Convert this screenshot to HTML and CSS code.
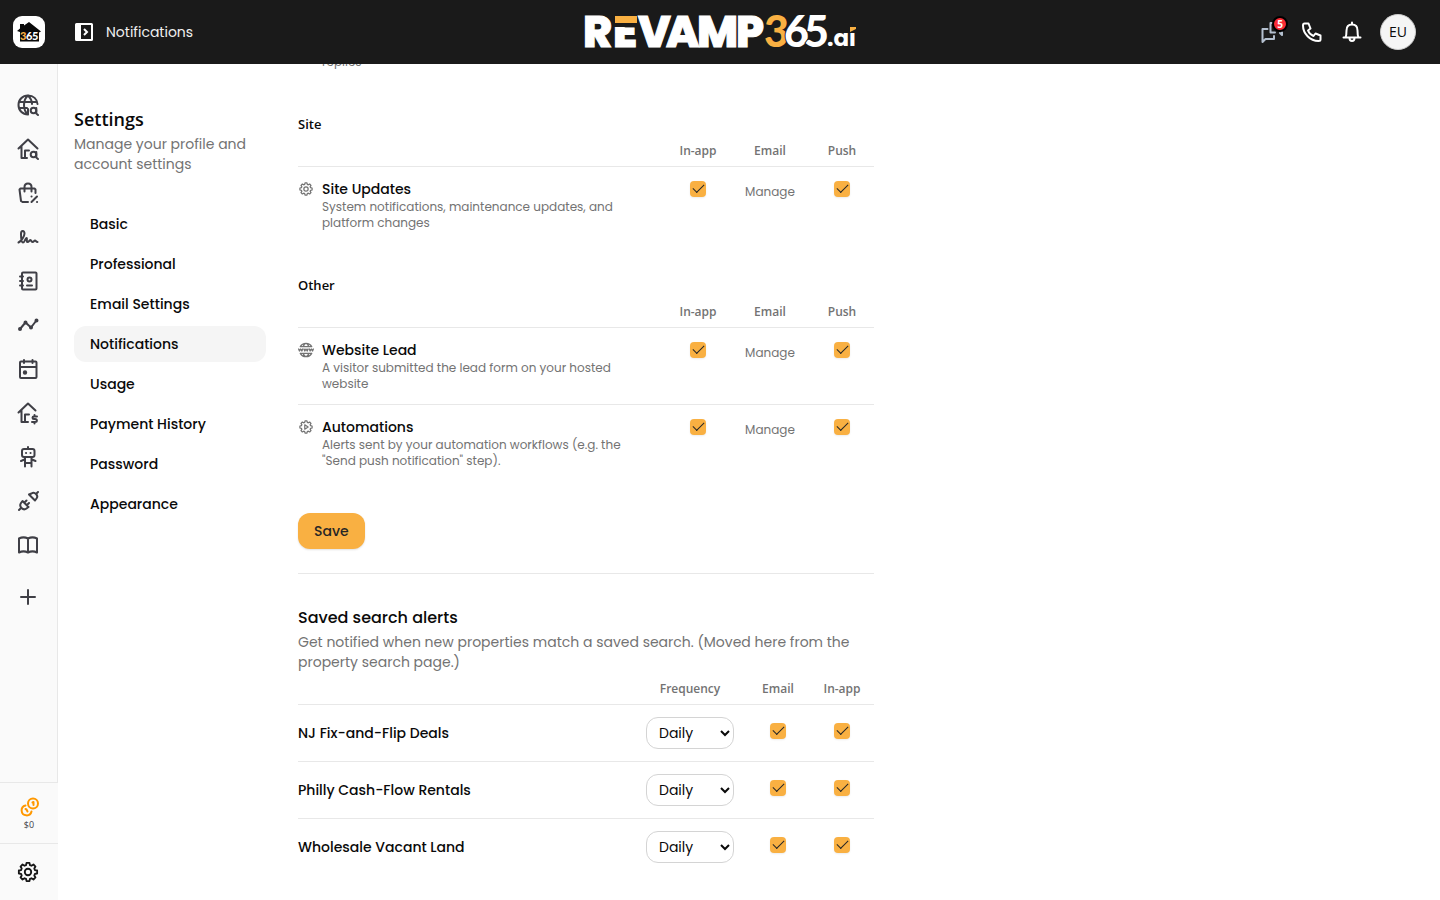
FILE: index.html
```html
<!DOCTYPE html>
<html lang="en">
<head>
<meta charset="utf-8">
<meta name="viewport" content="width=device-width, initial-scale=1">
<title>Notifications</title>
<link rel="stylesheet" href="styles.css">
</head>
<body>
<svg class="defs" aria-hidden="true">
  <defs>
    <symbol id="gear" viewBox="-1 -1 26 26"><path d="M10.400 2.100H13.600L14.100 4.500 15.800 5.200 17.900 3.900 20.100 6.100 18.800 8.200 19.500 9.900 21.900 10.400V13.600L19.500 14.100 18.800 15.800 20.100 17.900 17.900 20.100 15.800 18.800 14.100 19.500 13.600 21.900H10.400L9.900 19.500 8.200 18.800 6.100 20.100 3.900 17.900 5.200 15.800 4.500 14.100 2.100 13.600V10.400L4.500 9.900 5.200 8.200 3.900 6.100 6.100 3.900 8.200 5.200 9.900 4.500Z"/><circle cx="12" cy="12" r="3.500"/></symbol>
    <symbol id="auto" viewBox="-1 -1 26 26"><path d="M10.400 2.100H13.600L14.100 4.500 15.800 5.200 17.900 3.900 20.100 6.100 18.800 8.200 19.500 9.900 21.900 10.400V13.600L19.500 14.100 18.800 15.800 20.100 17.900 17.900 20.100 15.800 18.800 14.100 19.500 13.600 21.900H10.400L9.900 19.500 8.200 18.800 6.100 20.100 3.900 17.900 5.200 15.800 4.500 14.100 2.100 13.600V10.400L4.500 9.900 5.200 8.200 3.900 6.100 6.100 3.900 8.200 5.200 9.900 4.500Z"/><path d="M10 8.500v7l5.500-3.500z"/></symbol>
    <symbol id="www" viewBox="0 0 24 24"><path d="M3.500 7C5 4 8.300 2 12 2s7 2 8.500 5M3.500 17C5 20 8.300 22 12 22s7-2 8.500-5M8 7C8.700 4 10.200 2 12 2s3.300 2 4 5M8 17C8.700 20 10.200 22 12 22s3.300-2 4-5M4 7h16M4 17h16M1 10.500l1.200 3L4 10.500l1.800 3 1.200-3M9 10.500l1.200 3 1.800-3 1.800 3 1.200-3M17 10.500l1.200 3 1.800-3 1.800 3 1.200-3"/></symbol>
  </defs>
</svg>

<header class="topbar">
  <a class="brand" href="#" aria-label="Home">
    <svg viewBox="0 0 32 32" width="32" height="32"><rect width="32" height="32" rx="9" fill="#fff"/><path d="M4 15 7 12.500V8h4v1.500L16 6l12 9.500-2 1v9H7V16z" fill="#090909"/><text class="mark" x="7 13 19" y="24"><tspan class="gold">3</tspan><tspan>6</tspan><tspan>5</tspan></text></svg>
  </a>
  <button class="plain toggle" type="button" aria-label="Toggle sidebar">
    <svg viewBox="0 0 24 24" width="24" height="24"><path fill="#fff" fill-rule="evenodd" d="M4.500 3h15A1.500 1.500 0 0 1 21 4.500v15a1.500 1.500 0 0 1-1.500 1.500h-15A1.500 1.500 0 0 1 3 19.500v-15A1.500 1.500 0 0 1 4.500 3zM9 5v14h10V5z"/><path d="m12 9 3 3-3 3" fill="none" stroke="#fff" stroke-width="2"/></svg>
  </button>
  <h1 class="crumb">Notifications</h1>
  <svg class="logo" viewBox="0 0 272 40" width="272" height="40" role="img" aria-label="REVAMP365.ai">
    <text class="word" x="-1 29 54 82 113 152" y="35">REVAMP</text>
    <path d="M29 3h24v12H29z" fill="#1a1a1a"/><path d="M31 4h22v7H31z" fill="#f9b042"/>
    <text class="num" x="180 200 220" y="35"><tspan class="gold">3</tspan><tspan>6</tspan><tspan>5</tspan></text>
    <text class="ai" x="243" y="34">.ai</text>
    <path d="M265 13h8v7h-8z" fill="#1a1a1a"/><path d="M266 15h6v2l-6 3z" fill="#f9b042"/>
  </svg>
  <nav class="actions" aria-label="Account">
    <button class="plain" type="button" aria-label="Messages">
      <svg class="line muted" viewBox="0 0 24 24" width="24" height="24"><path d="M13 3h-2.500v9.500H15M20 13l2 2v-3M7.500 9H2.500v13l3-3H14v-3"/></svg>
      <span class="badge">5</span>
    </button>
    <button class="plain" type="button" aria-label="Calls">
      <svg class="line" viewBox="0 0 24 24" width="24" height="24"><path d="M4.500 3.500h4l2 5-2.500 2c1 2.500 3 4.500 5.500 5.500l2-2.500 5 2v4c0 1-1 1.500-2 1.500C10 21 3 13.500 3 5.500c0-1 .5-2 1.500-2z"/></svg>
    </button>
    <button class="plain" type="button" aria-label="Alerts">
      <svg class="line" viewBox="0 0 24 24" width="24" height="24"><path d="M3.500 17.500h17M5.500 17.500c1-2 1-3.500 1-7C6.500 7 8.500 4.500 12 4.500s5.500 2.500 5.500 6c0 3.500 0 5 1 7M12 4.500v-2M9.500 18c0 2 1 3 2.500 3s2.500-1 2.500-3"/></svg>
    </button>
    <button class="avatar" type="button">EU</button>
  </nav>
</header>

<div class="shell">
  <nav class="rail" aria-label="Main">
    <div class="rail-list">
      <a href="#" aria-label="Web search"><svg class="line" viewBox="0 0 24 24" width="24" height="24"><path d="M21.500 11C21 6 17.500 2.500 12 2.500S2.500 6.500 2.500 12s4 9.500 9.500 9.500M3 9h18M3 15h8M12 2.500C9 5 8 8 8 12s1 7 4 9.500V16M12 2.500C14.500 5 16 8 16 11"/><circle cx="17.500" cy="17.500" r="2.800"/><path d="M20.300 15v5.500L22 22"/></svg></a>
      <a href="#" aria-label="Property search"><svg class="line" viewBox="0 0 24 24" width="24" height="24"><path d="m2.500 11.500 9.500-9 9.500 9M5.500 9v12H9v-7.500h4M9 21h2"/><circle cx="17.500" cy="17.500" r="2.800"/><path d="M20.300 15v5.500L22 22"/></svg></a>
      <a href="#" aria-label="Deals"><svg class="line" viewBox="0 0 24 24" width="24" height="24"><path d="M19.500 12V8.500l-1-1H4.500l-1 1L5 20l1.500 1H12M8.500 10.500V6c0-2 1.500-3.500 3.500-3.500S15.500 4 15.500 6v4.500M21 15.500 15.500 21M15.500 15.500h.1M21 21h.1"/></svg></a>
      <a href="#" aria-label="Signatures"><svg class="line" viewBox="0 0 24 24" width="24" height="24"><path d="M2.500 17.500C5.500 16 8.500 11 8.500 8.500 8.500 5 5 5 5 9c0 4 .5 8.500 2 8.500 2 0 2-4.500 3.500-4.500 1 0-.5 4 1 4s2-2 3-2 .5 2 2 2 1.500-1.500 2.500-1.500 1 1.500 2.500 1.500"/></svg></a>
      <a href="#" aria-label="Contacts"><svg class="line" viewBox="0 0 24 24" width="24" height="24"><rect x="6" y="3.500" width="14.500" height="17" rx="1"/><path d="M4 7.500h3M4 12h3M4 16.500h3M11 16.500h5"/><circle cx="13.500" cy="10.500" r="2"/></svg></a>
      <a href="#" aria-label="Analytics"><svg class="line" viewBox="0 0 24 24" width="24" height="24"><path d="m4 16 5.500-6.500 5.500 5L20 8"/><g fill="currentColor"><circle cx="4" cy="16" r="1"/><circle cx="9.500" cy="9.500" r="1"/><circle cx="15" cy="14.500" r="1"/><circle cx="20.500" cy="7.500" r="1"/></g></svg></a>
      <a href="#" aria-label="Calendar"><svg class="line" viewBox="0 0 24 24" width="24" height="24"><rect x="4" y="4.500" width="16.500" height="16.500" rx="1"/><path d="M4 10h16M8 3v3M16.500 3v3"/><circle cx="9" cy="15.500" r="1.200" fill="currentColor"/></svg></a>
      <a href="#" aria-label="Property value"><svg class="line" viewBox="0 0 24 24" width="24" height="24"><path d="m2.500 11.500 9.500-9 7.500 7M5.500 9v12H9v-7.500h4M9 21h3M21 15.500h-3c-2 0-2 2.500 0 2.500h1c2.500 0 2.500 3 0 3h-3M18.500 14v1.500M18.500 21v1.500"/></svg></a>
      <a href="#" aria-label="Assistant"><svg class="line" viewBox="0 0 24 24" width="24" height="24"><rect x="6" y="4" width="12.500" height="8" rx="2"/><path d="M12 2v2M10 8h.1M14.500 8h.1M9 13v8.500M15.500 13v8.500M9 18h6.500M8.500 14.500 5 16M16 14.500l3.500 1.500"/></svg></a>
      <a href="#" aria-label="Integrations"><svg class="line" viewBox="0 0 24 24" width="24" height="24"><path d="m13 5.500 6 6 1.500-2c1.200-1.500 1-3-.5-4.500s-3-1.500-4.500-.5zM20 5l2-2M3 21l2-2M6.500 12l6 6-2 1.500c-1.500 1.200-3.500 1-5-.5s-1.500-3.500-.5-5zM8.500 13.500l2-2M11 16l2-2"/></svg></a>
      <a href="#" aria-label="Guides"><svg class="line" viewBox="0 0 24 24" width="24" height="24"><path d="M12 5.500C9 4 6 4 3 5.500v14c3-1.500 6-1.500 9 0 3-1.500 6-1.500 9 0v-14c-3-1.500-6-1.500-9 0zM12 5.500v14"/></svg></a>
      <button class="plain add" type="button" aria-label="Add"><svg class="line" viewBox="0 0 24 24" width="24" height="24"><path d="M12 5v14M5 12h14"/></svg></button>
    </div>
    <a class="credits" href="#">
      <svg class="line" viewBox="0 0 24 24" width="24" height="24"><circle cx="16" cy="8.500" r="5"/><path d="M8.500 10.500A5 5 0 1 0 14.500 16.500M15.500 7.500l1-.5v3M8.500 14l1 .5 1 2"/></svg>
      <span>$0</span>
    </a>
    <a class="rail-settings" href="#" aria-label="Settings"><svg class="line" width="24" height="24"><use href="#gear"/></svg></a>
  </nav>

  <main class="page">
    <aside class="side">
      <h2>Settings</h2>
      <p>Manage your profile and account settings</p>
      <nav class="menu" aria-label="Settings">
        <a href="#">Basic</a>
        <a href="#">Professional</a>
        <a href="#">Email Settings</a>
        <a href="#" class="active" aria-current="page">Notifications</a>
        <a href="#">Usage</a>
        <a href="#">Payment History</a>
        <a href="#">Password</a>
        <a href="#">Appearance</a>
      </nav>
    </aside>

    <div class="content">
      <p class="note scrolled">replies</p>

      <form>
      <section class="group">
        <h3>Site</h3>
        <table class="grid">
          <colgroup><col><col class="c72"><col class="c72"><col class="c72"></colgroup>
          <thead><tr><td></td><th scope="col">In-app</th><th scope="col">Email</th><th scope="col">Push</th></tr></thead>
          <tbody>
            <tr>
              <td><div class="item"><svg class="line" width="16" height="16"><use href="#gear"/></svg><div><h4>Site Updates</h4><p class="note">System notifications, maintenance updates, and platform changes</p></div></div></td>
              <td><input type="checkbox" checked aria-label="Site Updates in-app"></td>
              <td><a class="manage" href="#">Manage</a></td>
              <td><input type="checkbox" checked aria-label="Site Updates push"></td>
            </tr>
          </tbody>
        </table>
      </section>

      <section class="group">
        <h3>Other</h3>
        <table class="grid">
          <colgroup><col><col class="c72"><col class="c72"><col class="c72"></colgroup>
          <thead><tr><td></td><th scope="col">In-app</th><th scope="col">Email</th><th scope="col">Push</th></tr></thead>
          <tbody>
            <tr>
              <td><div class="item"><svg class="line" width="16" height="16"><use href="#www"/></svg><div><h4>Website Lead</h4><p class="note">A visitor submitted the lead form on your hosted website</p></div></div></td>
              <td><input type="checkbox" checked aria-label="Website Lead in-app"></td>
              <td><a class="manage" href="#">Manage</a></td>
              <td><input type="checkbox" checked aria-label="Website Lead push"></td>
            </tr>
            <tr>
              <td><div class="item"><svg class="line" width="16" height="16"><use href="#auto"/></svg><div><h4>Automations</h4><p class="note">Alerts sent by your automation workflows (e.g. the "Send push notification" step).</p></div></div></td>
              <td><input type="checkbox" checked aria-label="Automations in-app"></td>
              <td><a class="manage" href="#">Manage</a></td>
              <td><input type="checkbox" checked aria-label="Automations push"></td>
            </tr>
          </tbody>
        </table>
      </section>
      <button class="save" type="submit">Save</button>
      </form>

      <section class="alerts">
        <h2>Saved search alerts</h2>
        <p>Get notified when new properties match a saved search. (Moved here from the property search page.)</p>
        <table class="grid searches">
          <colgroup><col><col class="c112"><col class="c64"><col class="c64"></colgroup>
          <thead><tr><td></td><th scope="col">Frequency</th><th scope="col">Email</th><th scope="col">In-app</th></tr></thead>
          <tbody>
            <tr><th scope="row">NJ Fix-and-Flip Deals</th><td><select aria-label="NJ Fix-and-Flip Deals frequency"><option>Daily</option></select></td><td><input type="checkbox" checked aria-label="NJ Fix-and-Flip Deals email"></td><td><input type="checkbox" checked aria-label="NJ Fix-and-Flip Deals in-app"></td></tr>
            <tr><th scope="row">Philly Cash-Flow Rentals</th><td><select aria-label="Philly Cash-Flow Rentals frequency"><option>Daily</option></select></td><td><input type="checkbox" checked aria-label="Philly Cash-Flow Rentals email"></td><td><input type="checkbox" checked aria-label="Philly Cash-Flow Rentals in-app"></td></tr>
            <tr><th scope="row">Wholesale Vacant Land</th><td><select aria-label="Wholesale Vacant Land frequency"><option>Daily</option></select></td><td><input type="checkbox" checked aria-label="Wholesale Vacant Land email"></td><td><input type="checkbox" checked aria-label="Wholesale Vacant Land in-app"></td></tr>
          </tbody>
        </table>
      </section>
    </div>
  </main>
</div>
</body>
</html>
```

FILE: styles.css
```css
* { box-sizing: border-box; }
html, body { height: 100%; }
body {
  margin: 0;
  display: flex;
  flex-direction: column;
  background: #fff;
  color: #0a0a0a;
  font: 14px/20px Poppins, Inter, sans-serif;
}
h1, h2, h3, h4, p { margin: 0; font-weight: 500; }
a { color: inherit; text-decoration: none; }
button, select { font: inherit; color: inherit; }
svg { display: block; flex: none; overflow: visible; }
.defs { position: absolute; width: 0; height: 0; }
.line {
  fill: none;
  stroke: currentColor;
  stroke-width: 2;
  stroke-linejoin: round;
  stroke-linecap: round;
}
.plain { padding: 0; border: 0; background: none; cursor: pointer; }

/* Top bar */
.topbar {
  position: relative;
  flex: none;
  display: flex;
  align-items: center;
  height: 64px;
  padding: 0 24px 0 13px;
  background: #1a1a1a;
  color: #fff;
}
.toggle { margin-left: 27px; }
.crumb { margin-left: 10px; font-size: 14px; font-weight: 400; color: #f0f0f0; }
.logo { position: absolute; left: 50%; top: 12px; margin-left: -136px; }
.word, .num, .ai, .mark { fill: #fff; }
.word { font: 800 44px Poppins, sans-serif; stroke: #fff; stroke-width: 1; }
.num { font: 900 43px Lato, sans-serif; stroke: #1a1a1a; stroke-width: 2; paint-order: stroke; }
.ai { font: 700 23px Poppins, sans-serif; }
.mark { font: 900 11px Lato, sans-serif; }
.gold { fill: #f9b042; }
.actions { display: flex; align-items: center; gap: 16px; margin-left: auto; }
.actions .plain { position: relative; }
.muted { color: #b4c0cf; }
.badge {
  position: absolute;
  top: -4px;
  right: -4px;
  width: 16px;
  height: 16px;
  border: 2px solid #000;
  border-radius: 8px;
  background: #fb2c36;
  color: #fff;
  font: 700 10px/12px "Noto Sans", sans-serif;
  text-align: center;
}
.avatar {
  width: 36px;
  height: 36px;
  padding: 0;
  border: 1px solid #ccc;
  border-radius: 50%;
  background: #f5f5f5;
  color: #0a0a0a;
  font: 14px/20px "Open Sans", sans-serif;
}

/* Icon rail */
.shell { flex: 1; min-height: 0; display: flex; }
.rail {
  flex: none;
  width: 58px;
  display: flex;
  flex-direction: column;
  background: #fafafa;
  color: #3f3f46;
}
.rail-list {
  flex: 1;
  display: flex;
  flex-direction: column;
  gap: 20px;
  padding: 29px 16px 0;
  border-right: 1px solid #e8e8e8;
}
.add { margin-top: 8px; }
.credits, .rail-settings {
  display: flex;
  flex-direction: column;
  align-items: center;
  border-top: 1px solid #e8e8e8;
  padding: 12px 0;
}
.credits { color: #ff9800; height: 61px; }
.credits span { color: #3f3f46; font: 9px/12px "Open Sans", sans-serif; }
.rail-settings { height: 57px; padding: 16px 2px 0 0; color: #171717; }

/* Settings page */
.page {
  flex: 1;
  min-width: 0;
  overflow: hidden;
  display: flex;
  gap: 32px;
  padding: 0 16px;
}
.side { flex: none; width: 192px; padding-top: 40px; }
.side h2 { font: 600 18px/30px "Open Sans", sans-serif; }
.side p, .alerts p { color: #737373; font-weight: 400; }
.menu { display: flex; flex-direction: column; gap: 4px; margin-top: 32px; }
.menu a { padding: 8px 16px; border-radius: 12px; font-weight: 500; }
.menu .active { background: #f5f5f5; }
.content { flex: 1; min-width: 0; max-width: 576px; }
.note { color: #737373; font-size: 12px; line-height: 16px; font-weight: 400; }
.scrolled { margin: -10px 0 44px 24px; }
.group { margin-bottom: 32px; }
.group h3 { font: 600 13px/20px "Open Sans", sans-serif; }

.grid { width: 100%; table-layout: fixed; border-collapse: separate; border-spacing: 0; }
.c72 { width: 72px; }
.c112 { width: 112px; }
.c64 { width: 64px; }
.grid thead td, .grid thead th { height: 33px; border-bottom: 1px solid #e8e8e8; }
.grid th, .grid td { padding: 0 0 0 8px; text-align: center; }
.grid thead th { padding-top: 2px; color: #737373; font: 600 12px/16px "Open Sans", sans-serif; }
.grid tbody td { padding-top: 12px; padding-bottom: 12px; vertical-align: top; }
.grid tbody td:first-child { padding-left: 0; text-align: left; }
.grid tbody tr:not(:last-child) > * { border-bottom: 1px solid #e8e8e8; }
.item { display: flex; gap: 8px; max-width: 332px; }
.item svg { margin-top: 2px; color: #737373; }
.item h4 { font-size: 14px; line-height: 20px; }
.manage { display: block; padding-top: 4px; color: #737373; font-size: 12px; line-height: 18px; }

input[type="checkbox"] {
  appearance: none;
  display: block;
  width: 16px;
  height: 16px;
  margin: 2px auto 0;
  border-radius: 4px;
  background: #f9b042;
  box-shadow: 0 1px 2px rgb(0 0 0 / 8%);
}
input[type="checkbox"]:checked::before {
  content: "";
  display: block;
  width: 10px;
  height: 5px;
  margin: 4px 3px;
  border: solid #262626;
  border-width: 0 0 1px 1px;
  transform: translateY(-1px) rotate(-45deg);
}
.save {
  height: 36px;
  padding: 0 16px;
  border: 0;
  border-radius: 12px;
  background: #f9b042;
  box-shadow: 0 1px 2px rgb(0 0 0 / 12%);
  color: #262626;
  font-weight: 500;
}
.alerts { margin-top: 24px; padding-top: 32px; border-top: 1px solid #e8e8e8; }
.alerts h2 { font-size: 16px; line-height: 24px; margin-bottom: 2px; }
.searches th, .searches td { padding-left: 0; }
.searches tbody th { text-align: left; font-weight: 500; }
.searches input[type="checkbox"] { margin-top: 6px; }
select {
  display: block;
  width: 88px;
  height: 32px;
  margin: 0 auto;
  padding: 0 8px;
  border: 1px solid #d4d4d4;
  border-radius: 12px;
  background: #fff;
}
```
